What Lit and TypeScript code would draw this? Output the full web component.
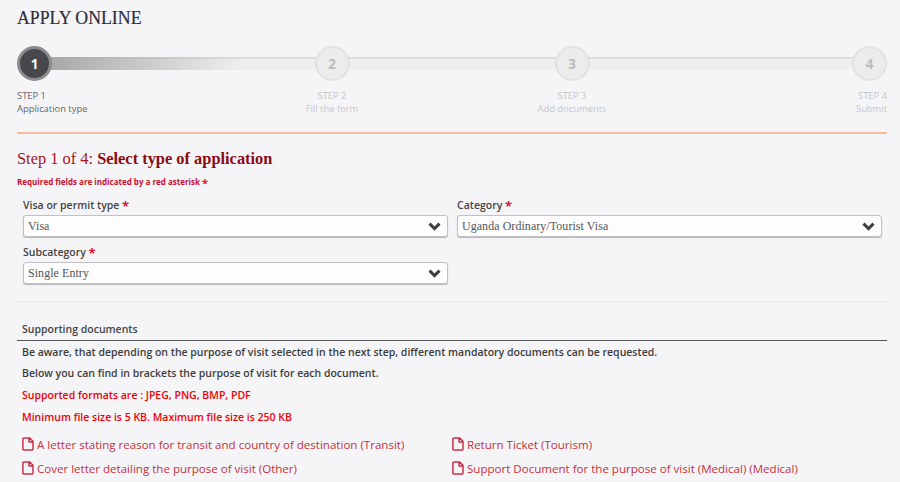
import { LitElement, html, css } from "lit";
import { customElement } from "lit/decorators.js";

const chevron = html`<svg class="chev" viewBox="0 0 12 8" width="13" height="9"><path d="M1.400 1.400 6 6l4.600-4.600" fill="none" stroke="#404040" stroke-width="2.800"/></svg>`;
const doc = html`<svg class="doc" viewBox="0 0 12 14" width="12" height="14"><path d="M2 .9h5.500L11 4.400V12a1.100 1.100 0 0 1-1.100 1.100H2A1.100 1.100 0 0 1 .9 12V2A1.100 1.100 0 0 1 2 .9zM7 1v4h4" fill="none" stroke="#c8324a" stroke-width="1.500" stroke-linejoin="round"/></svg>`;

@customElement("app-root")
export class AppRoot extends LitElement {
  static styles = css`
    :host { display: block; width: 900px; height: 482px; overflow: hidden; background: #f5f5f8; font-family: "Open Sans", sans-serif; color: #333; box-sizing: border-box; padding: 0 13px 0 17px; }
    h1 { margin: 0; padding-top: 8px; height: 46px; box-sizing: border-box; font: 400 17.800px/20px "Liberation Serif", serif; color: #2e2e38; -webkit-text-stroke: .2px #2e2e38; }
    .stepper { position: relative; height: 86px; border-bottom: 2px solid #f8bc9c; box-sizing: content-box; }
    .steps { display: grid; grid-template-columns: 1fr 120px 120px 1fr; column-gap: 120px; position: relative; }
    .track { position: absolute; left: 17px; right: 17px; top: 11px; height: 13px; box-sizing: border-box; background: #efeff1; border-top: 2px solid #dedee0; }
    .fill { position: absolute; left: 17px; top: 11px; width: 210px; height: 13px; background: linear-gradient(90deg,#a2a2a2,rgba(239,239,241,0)); }
    .step { display: flex; flex-direction: column; font-size: 9.400px; line-height: 13px; color: #c6c6ca; align-items: center; text-align: center; }
    .step:first-child { align-items: flex-start; text-align: left; color: #666; }
    .step:last-child { align-items: flex-end; text-align: right; }
    .num { box-sizing: border-box; width: 35px; height: 35px; margin-bottom: 8px; border-radius: 50%; background: #ececee; border: 2px solid #e2e2e4; color: #bcbcc0; display: flex; align-items: center; justify-content: center; font: 700 13.500px "Open Sans", sans-serif; }
    .step:first-child .num { background: #48484c; border: 3px solid #8c8c8e; color: #fff; }
    h2 { margin: 15px 0 0; font: 400 16.400px/20px "Liberation Serif", serif; color: #a8141c; }
    h2 b { font-weight: 700; color: #8b0a10; }
    .req { margin-top: 7px; font-size: 8px; font-weight: 700; line-height: 12px; color: #c8102e; }
    .req i { color: #e0122f; font-style: normal; font-size: 11px; line-height: 10px; vertical-align: -2px; }
    .form { display: grid; grid-template-columns: 425px 425px; column-gap: 9px; row-gap: 7px; padding: 9px 6px 0; }
    label { display: block; font-size: 10.500px; font-weight: 600; line-height: 16px; color: #444; margin-bottom: 2px; }
    label i { color: #e0122f; font-style: normal; font-size: 13px; font-weight: 700; line-height: 10px; vertical-align: -2px; }
    .select { box-sizing: border-box; height: 22px; border: 1px solid #c0c0c4; border-radius: 3px; box-shadow: 0 1px 1px #b8b8bc; background: #fdfdfd; display: flex; align-items: center; justify-content: space-between; padding: 0 6px 0 4px; font: 400 11.900px/18px "Liberation Serif", serif; color: #555; letter-spacing: .1px; }
    .sep { height: 1px; background: #e8e8ea; margin-top: 17px; }
    .sd { margin-top: 19px; font-size: 10.500px; font-weight: 600; line-height: 16px; padding: 0 5px 3px; border-bottom: 1px solid #555; color: #444; }
    .notes { padding-top: .6px; }
    p { margin: 0; font-size: 10.500px; font-weight: 600; line-height: 21.700px; padding-left: 5px; color: #3c3c3c; }
    p.red { color: #f00000; }
    .docs { display: grid; grid-template-columns: 430px 1fr; row-gap: 7px; margin-top: 7.500px; padding-left: 5px; }
    .d { display: flex; align-items: center; gap: 3px; font-size: 11.550px; line-height: 17px; color: #c4303c; }
  `;

  render() {
    const steps = [["1","STEP 1","Application type"],["2","STEP 2","Fill the form"],["3","STEP 3","Add documents"],["4","STEP 4","Submit"]];
    const docs = ["A letter stating reason for transit and country of destination (Transit)","Return Ticket (Tourism)","Cover letter detailing the purpose of visit (Other)","Support Document for the purpose of visit (Medical) (Medical)"];
    return html`
      <h1>APPLY ONLINE</h1>
      <div class="stepper">
        <div class="track"></div><div class="fill"></div>
        <div class="steps">${steps.map(s => html`<div class="step"><div class="num">${s[0]}</div><div>${s[1]}</div><div>${s[2]}</div></div>`)}</div>
      </div>
      <h2>Step 1 of 4: <b>Select type of application</b></h2>
      <div class="req">Required fields are indicated by a red asterisk <i>*</i></div>
      <div class="form">
        <div><label>Visa or permit type <i>*</i></label><div class="select">Visa ${chevron}</div></div>
        <div><label>Category <i>*</i></label><div class="select">Uganda Ordinary/Tourist Visa ${chevron}</div></div>
        <div><label>Subcategory <i>*</i></label><div class="select">Single Entry ${chevron}</div></div>
      </div>
      <div class="sep"></div>
      <div class="sd">Supporting documents</div>
      <div class="notes">
        <p>Be aware, that depending on the purpose of visit selected in the next step, different mandatory documents can be requested.</p>
        <p>Below you can find in brackets the purpose of visit for each document.</p>
        <p class="red">Supported formats are : JPEG, PNG, BMP, PDF</p>
        <p class="red">Minimum file size is 5 KB. Maximum file size is 250 KB</p>
      </div>
      <div class="docs">${docs.map(d => html`<div class="d">${doc}<span>${d}</span></div>`)}</div>
    `;
  }
}
